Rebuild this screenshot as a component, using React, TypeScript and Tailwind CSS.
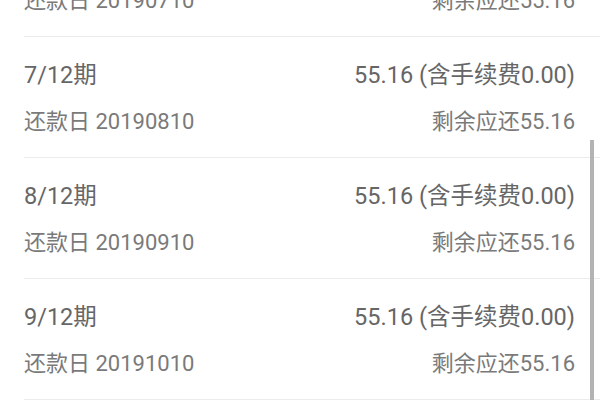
const rows = [
  { period: "6/12期", date: "20190710" },
  { period: "7/12期", date: "20190810" },
  { period: "8/12期", date: "20190910" },
  { period: "9/12期", date: "20191010" },
];

export default function App() {
  return (
    <div
      className="relative w-[600px] h-[400px] overflow-hidden bg-white"
      style={{ fontFamily: 'Roboto, "Noto Sans CJK SC", sans-serif' }}
    >
      <div className="-mt-[84px] pl-[24px]">
        {rows.map((r) => (
          <div key={r.period} className="border-b border-[#ececec] pt-[25px] pb-[22px] pr-[25px]">
            <div className="flex justify-between items-center h-[28px] text-[23.5px] text-[#666]">
              <span>{r.period}</span>
              <span>55.16 (含手续费0.00)</span>
            </div>
            <div className="flex justify-between items-center h-[28px] mt-[17px] text-[22px] text-[#7a7a7a]">
              <span>还款日 {r.date}</span>
              <span>剩余应还55.16</span>
            </div>
          </div>
        ))}
      </div>
      <div className="absolute right-[6px] top-[140px] bottom-0 w-[4px] bg-[#b3b3b3]" />
    </div>
  );
}
